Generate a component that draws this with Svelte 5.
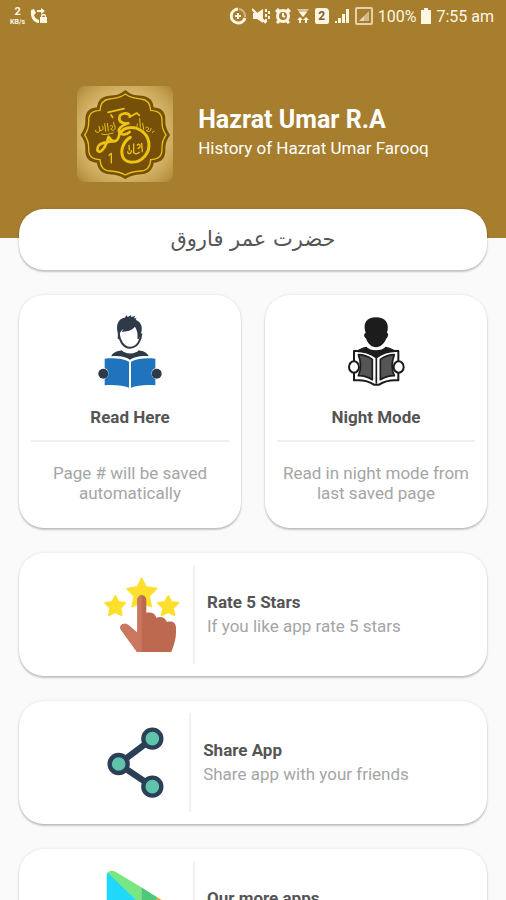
<script lang="ts">
	type Icon = 'reader' | 'night' | 'rate' | 'share' | 'store';
	type Entry = { icon: Icon; title: string; text?: string };

	const modes: Entry[] = [
		{ icon: 'reader', title: 'Read Here', text: 'Page # will be saved automatically' },
		{ icon: 'night', title: 'Night Mode', text: 'Read in night mode from last saved page' }
	];

	const actions: Entry[] = [
		{ icon: 'rate', title: 'Rate 5 Stars', text: 'If you like app rate 5 stars' },
		{ icon: 'share', title: 'Share App', text: 'Share app with your friends' },
		{ icon: 'store', title: 'Our more apps' }
	];
</script>

{#snippet picture(icon: Icon)}
	{#if icon === 'reader'}
		<svg class="picture picture--tall" viewBox="1 0 240 270" aria-hidden="true">
			<path fill="#2e3a48" d="M85 86C77 58 87 40 105 38l6-7 3 5 11-6-1 6 13-3-4 7 8 0-3 4c19 8 22 26 15 44l-4 14-6-1c2-14 0-24-7-36-12 14-27 14-40 15l6-8c-10 5-14 16-13 29l-5 1z" />
			<path fill="none" stroke="#2e3a48" stroke-width="6" stroke-linejoin="round" d="M87 84c2 22 13 44 34 44s33-21 34-43" />
			<path fill="#2e3a48" d="M65 154c3-11 17-15 31-18 8 12 42 13 51 0 15 3 26 7 30 18-21-3-40 0-56 10-15-10-35-13-56-10z" />
			<path fill="#1f74bd" d="M45 161c28-3 52-1 73 9v78c-18-7-43-9-73-7v-19c15-5 16-28 0-32zM197 161c-28-3-52-1-73 9v78c18-7 43-9 73-7v-19c-15-5-16-28 0-32z" />
			<circle cx="41" cy="206" r="15" fill="#2e3a48" />
			<circle cx="201" cy="206" r="15" fill="#2e3a48" />
		</svg>
	{:else if icon === 'night'}
		<svg class="picture picture--tall" viewBox="-11 0 240 270" aria-hidden="true">
			<path fill="#1c1c1c" d="M78 84C68 53 82 37 109 37s42 16 33 47c6 0 3 14-2 16-5 14-17 27-31 27s-26-13-30-27c-6-2-8-15-1-16z" />
			<path fill="#1c1c1c" d="M47 140c9-8 20-12 33-15 12 14 46 14 58 0 13 3 25 7 34 15v12l-62 20-63-20z" />
			<path fill="#fff" stroke="#1c1c1c" stroke-width="6" stroke-linejoin="round" d="M43 138c29-2 50 7 67 19 18-13 38-21 66-19v88c-24-2-43 3-58 13h-15c-15-11-36-15-60-13z" />
			<path fill="#555" stroke="#1c1c1c" stroke-width="5" stroke-linejoin="round" d="M56 149c16 0 29 5 42 14v61c-13-8-26-12-42-12 8-17 8-42 0-63zM164 149c-16 0-29 5-42 14v61c13-8 26-12 42-12-8-17-8-42 0-63z" />
			<path stroke="#1c1c1c" stroke-width="5" d="M110 158v78" />
			<ellipse cx="43" cy="186" rx="15" ry="17" fill="#fff" stroke="#1c1c1c" stroke-width="6" />
			<ellipse cx="177" cy="186" rx="15" ry="17" fill="#fff" stroke="#1c1c1c" stroke-width="6" />
		</svg>
	{:else if icon === 'rate'}
		<svg class="picture" viewBox="33 42 240 240" aria-hidden="true">
			<g fill="#ffdf2d" stroke="#ffdf2d" stroke-width="6" stroke-linejoin="round">
				<path d="M155 53l12 25 32 5-22 22 6 31-28-13-28 13 6-31-21-22 31-5z" />
				<path d="M76 105l9 18 20 3-14 15 4 21-19-9-19 9 4-21-15-15 21-3z" />
				<path d="M235 105l9 18 20 3-15 15 4 21-18-9-20 9 5-21-16-15 21-3z" />
			</g>
			<path fill="#bd6950" d="M142 118c0-20 27-20 27 0v37c12-2 25-1 30 15 15-4 26-1 32 13 15-4 26 1 27 16 1 28-2 43-14 74h-103l-47-65c-11-16 9-27 22-15l26 22z" />
			<path fill="#cb765e" d="M142 118c0-9 6-15 13-15v170h-14l-47-65c-11-16 9-27 22-15l26 22z" />
		</svg>
	{:else if icon === 'share'}
		<svg class="picture" viewBox="15 36 240 240" aria-hidden="true">
			<path fill="none" stroke="#2b3f56" stroke-width="19" d="M181 83L80 159l101 68" />
			<g fill="#60c4ac" stroke="#2b3f56" stroke-width="13">
				<circle cx="181" cy="83" r="27" />
				<circle cx="80" cy="159" r="27" />
				<circle cx="181" cy="227" r="27" />
			</g>
		</svg>
	{:else}
		<svg class="picture" viewBox="33 91 240 240" aria-hidden="true">
			<path fill="#20d9fa" d="M50 102q0-5 5-7l118 116L55 327q-5-2-5-9z" />
			<path fill="#78e681" d="M53 96q8-10 23-3l78 47v52z" />
			<path fill="#50c878" d="M154 140l50 31-31 40-19-19z" />
			<path fill="#ff9820" d="M204 171l46 30q12 10 0 20l-46 30-31-40z" />
			<path fill="#f04d50" d="M55 327l118-116 31 40-128 77q-12 6-21-1z" />
		</svg>
	{/if}
{/snippet}

<div class="screen">
	<header class="header">
		<div class="status">
			<div class="status__group">
				<span class="speed"><b>2</b><small>KB/s</small></span>
				<svg width="17" height="16" viewBox="0 0 17 16" fill="currentColor" aria-hidden="true">
					<path d="M1 2l3-1 2 4-2 2c1 3 2 4 5 5v3C4 15 0 10 1 2z" />
					<path d="M7 2h4V0l4 3-4 3V4H7zM11 8c0-3 5-3 5 0v1h1v6h-7V9h1zm1 1h3c0-2-3-2-3 0z" />
				</svg>
			</div>
			<div class="status__group">
				<svg width="18" height="18" viewBox="0 0 18 18" fill="none" stroke="currentColor" aria-hidden="true">
					<path stroke-width="3" d="M9 2a7 7 0 1 0 7 9" />
					<path stroke-width="2" opacity=".5" d="M10 2a7 7 0 0 1 6 8" />
					<path stroke-width="2" d="M9 6v6M6 9h6" />
				</svg>
				<svg width="18" height="16" viewBox="0 0 18 16" fill="currentColor" aria-hidden="true">
					<path d="M1 5h4l6-4v14l-6-4H1z" />
					<path fill="none" stroke="currentColor" stroke-width="2" d="M0 1l14 14M14 1v3M14 6v3M14 11v3M17 3v3M17 8v3" />
				</svg>
				<svg width="16" height="16" viewBox="0 0 16 16" aria-hidden="true">
					<path fill="none" stroke="currentColor" stroke-width="3" d="M1 4l3-3M12 1l3 3M2 15l3-3M14 15l-3-3" />
					<circle cx="8" cy="8" r="7" fill="currentColor" />
					<circle cx="8" cy="8" r="4" fill="#a67e2e" />
					<path fill="none" stroke="currentColor" stroke-width="2" d="M8 5v3l2 1" />
				</svg>
				<svg width="14" height="16" viewBox="0 0 14 16" fill="currentColor" aria-hidden="true">
					<path opacity=".6" d="M1 1h12L7 9z" />
					<path d="M3 4h8L7 9zM4 9l3 3H5v3H3v-3H1zM10 9l3 3h-2v3H9v-3H7z" />
				</svg>
				<span class="sim">2</span>
				<svg width="16" height="16" viewBox="0 0 16 16" fill="currentColor" aria-hidden="true">
					<path d="M1 13h2v2H1zM4 10h3v5H4zM8 6h3v9H8zM12 1h3v14h-3z" />
				</svg>
				<svg width="18" height="18" viewBox="0 0 18 18" fill="currentColor" aria-hidden="true">
					<rect x="1" y="1" width="16" height="16" rx="1" fill="none" stroke="currentColor" stroke-width="2" opacity=".7" />
					<path opacity=".5" d="M4 14L14 4v10z" />
					<path opacity=".5" d="M4 14l5-5v5z" />
				</svg>
				<span>100%</span>
				<svg width="10" height="16" viewBox="0 0 10 16" fill="currentColor" aria-hidden="true">
					<path d="M3 0h4v2h3v14H0V2h3z" />
				</svg>
				<time>7:55 am</time>
			</div>
		</div>

		<div class="brand">
			<svg class="logo" viewBox="20 18 288 288" aria-hidden="true">
				<defs>
					<radialGradient id="logo-glow" r="0.7">
						<stop offset="0.6" stop-color="#d6b868" />
						<stop offset="0.8" stop-color="#c6a354" />
						<stop offset="1" stop-color="#ac8536" />
					</radialGradient>
				</defs>
				<rect x="20" y="18" width="288" height="288" rx="24" fill="url(#logo-glow)" />
				<path
					fill="#765009"
					stroke="#765009"
					stroke-width="6"
					stroke-linejoin="round"
					d="M165 34c15 14 30 15 49 16 25 3 31 16 34 35 28 2 35 15 34 39 0 17 4 28 14 41-10 13-14 24-14 41 1 24-7 38-34 39-3 21-12 34-36 35-18 1-32 3-47 14-15-11-29-13-47-14-24-1-33-14-36-35-27-1-35-15-34-39 0-17-4-28-14-41 10-13 14-24 14-41-1-24 6-37 34-39 3-19 9-32 34-35 19-1 34-2 49-16z"
				/>
				<path
					fill="none"
					stroke="#e8bf18"
					stroke-width="4"
					d="M165 42c15 12 30 13 47 15 21 2 28 14 29 34 26 2 35 12 34 35 0 16 3 27 12 39-9 12-12 23-12 39 1 23-8 33-34 35-1 20-10 33-31 34-18 1-30 3-45 12-15-9-27-11-45-12-21-1-30-14-31-34-26-2-35-12-34-35 0-16-3-27-12-39 9-12 12-23 12-39-1-23 8-33 34-35 1-20 8-32 29-34 17-2 32-3 47-15z"
				/>
				<g fill="none" stroke="#edc411" stroke-linecap="round" stroke-linejoin="round">
					<path stroke-width="8" d="M179 108c-7-12-31-10-32 6-1 13 12 18 27 16-20 6-34 17-26 28 6 9 20 6 30-2" />
					<path stroke-width="9" d="M150 160c8-20 40-22 60-10 30 18 34 56 12 80-20 22-54 21-64 2-9-18 0-48 22-60" />
					<path stroke-width="8" d="M148 158c-2 16-8 27-18 26-8-1-11-8-15-14-5 18-14 40-26 45-11 2-10-14 0-22 14-8 28-6 42-10" />
					<path stroke-width="5" d="M113 97l48-11M177 112l22-13 8 7M122 105l5 7" />
					<path stroke-width="3" d="M76 151c-3 9 12 9 13 0M86 139l3 12c10 3 12-8 7-13M103 131l3 23M111 130l3 23M119 139c8-8 12 4 2 8 8 8 15 2 14-7M130 127l2 12M94 162c14 5 24-2 34-3" />
					<path stroke-width="3" d="M192 140c4 7 10 2 9-8M208 116l2 26M217 130l3 18M226 143c10-7 12 7 2 9 10 6 14 0 14-7M246 157l5-3" />
					<path stroke-width="4" d="M190 192v26M201 195c8-8 13 8 2 10M214 190l2 25M207 217c-8 8-15 5-18-2M172 216c1 9 12 5 11-4M176 196l1 14M116 226l7-6v29" />
				</g>
			</svg>
			<div class="brand__text">
				<h1>Hazrat Umar R.A</h1>
				<p>History of Hazrat Umar Farooq</p>
			</div>
		</div>
	</header>

	<main class="content">
		<h2 class="card banner" lang="ur" dir="rtl">حضرت عمر فاروق</h2>

		<div class="modes">
			{#each modes as mode}
				<button type="button" class="card mode">
					{@render picture(mode.icon)}
					<span class="title">{mode.title}</span>
					<span class="mode__text">{mode.text}</span>
				</button>
			{/each}
		</div>

		{#each actions as action}
			<button type="button" class="card action">
				{@render picture(action.icon)}
				<span class="action__text">
					<span class="title">{action.title}</span>
					{#if action.text}
						<span class="note">{action.text}</span>
					{/if}
				</span>
			</button>
		{/each}
	</main>
</div>

<style>
	:global(body) {
		background: #fafafa;
	}

	.screen {
		height: 100vh;
		overflow-y: auto;
		scrollbar-width: none;
		background: #fafafa;
		color: #555;
		font-family: Roboto, 'Noto Sans', sans-serif;
		font-size: 17px;
	}

	.screen svg {
		flex: none;
	}

	.header {
		padding-bottom: 56px;
		background: #a67e2e;
		color: #fff;
	}

	.status {
		display: flex;
		justify-content: space-between;
		align-items: center;
		height: 32px;
		padding: 0 12px 0 10px;
		color: #fff6e4;
		font-size: 16px;
	}

	.status__group {
		display: flex;
		align-items: center;
		gap: 5px;
	}

	.speed {
		display: flex;
		flex-direction: column;
		align-items: center;
		font-size: 11px;
		line-height: 13px;
	}

	.speed small {
		font-size: 7px;
		font-weight: 700;
		line-height: 9px;
	}

	.sim {
		width: 14px;
		border-radius: 2px 4px 2px 2px;
		background: #fff6e4;
		color: #80601f;
		font-size: 12px;
		font-weight: 700;
		line-height: 16px;
		text-align: center;
	}

	.brand {
		display: flex;
		justify-content: center;
		align-items: center;
		gap: 25px;
		padding-top: 54px;
	}

	.brand__text {
		padding-bottom: 5px;
	}

	.logo {
		width: 96px;
		height: 96px;
	}

	h1,
	h2,
	p {
		margin: 0;
	}

	h1 {
		font-size: 25px;
		font-weight: 700;
		line-height: 32px;
	}

	.brand p {
		line-height: 24px;
	}

	.content {
		display: flex;
		flex-direction: column;
		gap: 25px;
		margin-top: -29px;
		padding: 0 19px 25px;
	}

	.card {
		box-sizing: border-box;
		border: 0;
		border-radius: 25px;
		background: #fff;
		box-shadow:
			0 2px 2px #0003,
			0 0 3px #0000001f;
		color: #555;
		font-family: inherit;
		font-size: 17px;
	}

	button.card {
		cursor: pointer;
	}

	button.card:focus-visible {
		outline: 2px solid #a67e2e;
		outline-offset: 2px;
	}

	.banner {
		padding: 11px 20px;
		color: #555;
		font-family: 'DejaVu Sans', sans-serif;
		font-size: 21px;
		font-weight: 400;
		line-height: 39px;
		text-align: center;
	}

	.modes {
		display: grid;
		grid-template-columns: 1fr 1fr;
		gap: 24px;
	}

	.mode {
		display: flex;
		flex-direction: column;
		align-items: center;
		padding: 10px 12px 25px;
	}

	.mode .title {
		margin-top: 10px;
	}

	.title {
		font-weight: 700;
		line-height: 24px;
	}

	.mode__text {
		align-self: stretch;
		margin-top: 11px;
		padding-top: 21px;
		border-top: 2px solid #efefef;
		color: #a5a5a5;
		line-height: 20px;
	}

	.note {
		color: #a5a5a5;
		line-height: 24px;
	}

	.picture {
		width: 80px;
		height: 80px;
	}

	.picture--tall {
		height: 90px;
	}

	.action {
		display: flex;
		justify-content: center;
		align-items: center;
		gap: 12px;
		padding: 12px;
	}

	.action__text {
		display: flex;
		flex-direction: column;
		box-sizing: border-box;
		min-width: 212px;
		min-height: 99px;
		padding: 25px 0 25px 12px;
		border-left: 2px solid #f1f1f1;
		text-align: left;
	}
</style>
